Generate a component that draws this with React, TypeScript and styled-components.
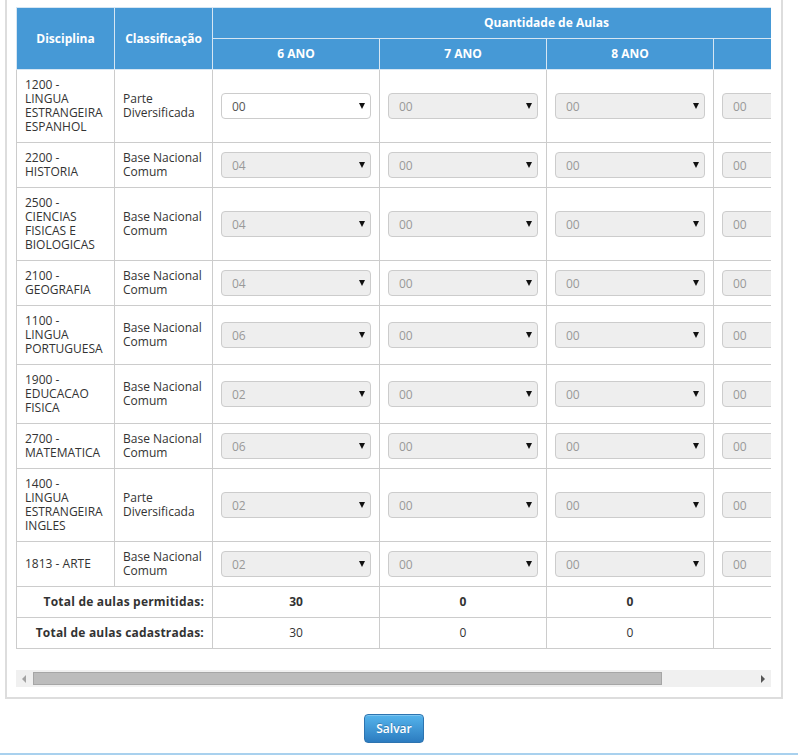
import styled, { createGlobalStyle } from "styled-components";

const GlobalStyle = createGlobalStyle`
  body {
    margin: 0;
    background: #fff;
    font-family: "Open Sans", "Liberation Sans", sans-serif;
    font-size: 12px;
    color: #333;
  }
`;

const TABLE_WIDTH = 865;
const VIEW_WIDTH = 755;

const Panel = styled.div`
  margin-left: 5px;
  width: 778px;
  box-sizing: border-box;
  border: 2px solid #ddd;
  border-top: none;
  padding: 7px 10px 10px 9px;
  background: #fff;
`;

const Scroller = styled.div`
  overflow-x: hidden;
`;

const ScrollBar = styled.div`
  display: flex;
  height: 17px;
  background: #f0f0f0;
`;

const ScrollArrow = styled.div<{ $dir: "left" | "right" }>`
  flex: 0 0 17px;
  display: flex;
  align-items: center;
  justify-content: center;

  &::before {
    content: "";
    width: 0;
    height: 0;
    border-top: 4px solid transparent;
    border-bottom: 4px solid transparent;
    ${(p) =>
      p.$dir === "left"
        ? "border-right: 4px solid #a3a3a3; margin-left: -1px;"
        : "border-left: 4px solid #555; margin-left: 1px;"}
  }
`;

const ScrollRail = styled.div`
  flex: 1;
  display: flex;
  align-items: center;
`;

const ScrollThumb = styled.div`
  height: 13px;
  box-sizing: border-box;
  background: #bcbcbc;
  border: 1px solid #a6a6a6;
`;

const Table = styled.table`
  width: ${TABLE_WIDTH}px;
  table-layout: fixed;
  border-collapse: collapse;
  margin-bottom: 21px;
  border: 1px solid #ccc;
`;

const HeadCell = styled.th`
  background: #4699d6;
  color: #fff;
  font-weight: bold;
  text-align: center;
  vertical-align: middle;
  padding: 8px;
  line-height: 14px;
  border: 1px solid #d6e6f3;
`;

const Cell = styled.td<{ $align?: "left" | "center" | "right"; $bold?: boolean }>`
  padding: 8px;
  line-height: 14px;
  vertical-align: middle;
  text-align: ${(p) => p.$align || "left"};
  font-weight: ${(p) => (p.$bold ? "bold" : "normal")};
  border: 1px solid #ccc;
  color: #333;
`;

const TotalLabel = styled(Cell)`
  letter-spacing: 0.2px;
`;

const SelectBox = styled.div`
  position: relative;
`;

const Select = styled.select`
  appearance: none;
  -webkit-appearance: none;
  display: block;
  width: 100%;
  height: 26px;
  box-sizing: border-box;
  margin: 0;
  padding: 0 22px 0 10px;
  border: 1px solid #ccc;
  border-radius: 4px;
  background: #fff;
  color: #555;
  font-family: inherit;
  font-size: 12px;

  &:disabled {
    background: #eee;
    color: #999;
    opacity: 1;
  }
`;

const Caret = styled.span`
  position: absolute;
  right: 6px;
  top: 10px;
  width: 0;
  height: 0;
  border-left: 3.5px solid transparent;
  border-right: 3.5px solid transparent;
  border-top: 6px solid #111;
  pointer-events: none;
`;

const Actions = styled.div`
  margin-left: 5px;
  width: 778px;
  padding-top: 15px;
  text-align: center;
`;

const SaveButton = styled.button`
  width: 60px;
  height: 29px;
  padding: 0;
  border: 1px solid #2d74b0;
  border-radius: 4px;
  background: linear-gradient(#55b4ec, #2c7cc0);
  color: #fff;
  font-family: inherit;
  font-size: 12px;
  font-weight: 600;
  text-shadow: 0 -1px 0 rgba(0, 0, 0, 0.2);
  box-shadow: inset 0 1px 0 rgba(255, 255, 255, 0.25);
`;

const Footer = styled.div`
  margin-top: 10px;
  border-top: 2px solid #a9d1ee;
  height: 20px;
`;

const anos = ["6 ANO", "7 ANO", "8 ANO", "9 ANO"];

interface Disciplina {
  nome: string;
  classificacao: string;
  aulas: string;
}

const disciplinas: Disciplina[] = [
  { nome: "1200 - LINGUA ESTRANGEIRA ESPANHOL", classificacao: "Parte Diversificada", aulas: "00" },
  { nome: "2200 - HISTORIA", classificacao: "Base Nacional Comum", aulas: "04" },
  { nome: "2500 - CIENCIAS FISICAS E BIOLOGICAS", classificacao: "Base Nacional Comum", aulas: "04" },
  { nome: "2100 - GEOGRAFIA", classificacao: "Base Nacional Comum", aulas: "04" },
  { nome: "1100 - LINGUA PORTUGUESA", classificacao: "Base Nacional Comum", aulas: "06" },
  { nome: "1900 - EDUCACAO FISICA", classificacao: "Base Nacional Comum", aulas: "02" },
  { nome: "2700 - MATEMATICA", classificacao: "Base Nacional Comum", aulas: "06" },
  { nome: "1400 - LINGUA ESTRANGEIRA INGLES", classificacao: "Parte Diversificada", aulas: "02" },
  { nome: "1813 - ARTE", classificacao: "Base Nacional Comum", aulas: "02" },
];

const totais = [
  { label: "Total de aulas permitidas:", valores: ["30", "0", "0", "0"], bold: true },
  { label: "Total de aulas cadastradas:", valores: ["30", "0", "0", "0"], bold: false },
];

const AulasSelect = ({ value, disabled }: { value: string; disabled: boolean }) => (
  <SelectBox>
    <Select defaultValue={value} disabled={disabled}>
      <option value={value}>{value}</option>
    </Select>
    <Caret />
  </SelectBox>
);

export default function App() {
  const thumbRatio = VIEW_WIDTH / TABLE_WIDTH;

  return (
    <>
      <GlobalStyle />
      <Panel>
        <Scroller>
          <Table>
            <colgroup>
              <col style={{ width: 98 }} />
              <col style={{ width: 98 }} />
              <col style={{ width: 167 }} />
              <col style={{ width: 167 }} />
              <col style={{ width: 167 }} />
              <col style={{ width: 167 }} />
            </colgroup>
            <thead>
              <tr>
                <HeadCell rowSpan={2}>Disciplina</HeadCell>
                <HeadCell rowSpan={2}>Classificação</HeadCell>
                <HeadCell colSpan={4}>Quantidade de Aulas</HeadCell>
              </tr>
              <tr>
                {anos.map((ano) => (
                  <HeadCell key={ano}>{ano}</HeadCell>
                ))}
              </tr>
            </thead>
            <tbody>
              {disciplinas.map((d, i) => (
                <tr key={d.nome}>
                  <Cell>{d.nome}</Cell>
                  <Cell>{d.classificacao}</Cell>
                  {anos.map((ano, j) => (
                    <Cell key={ano}>
                      <AulasSelect
                        value={j === 0 ? d.aulas : "00"}
                        disabled={!(i === 0 && j === 0)}
                      />
                    </Cell>
                  ))}
                </tr>
              ))}
              {totais.map((t) => (
                <tr key={t.label}>
                  <TotalLabel colSpan={2} $align="right" $bold>
                    {t.label}
                  </TotalLabel>
                  {t.valores.map((v, j) => (
                    <Cell key={j} $align="center" $bold={t.bold}>
                      {v}
                    </Cell>
                  ))}
                </tr>
              ))}
            </tbody>
          </Table>
        </Scroller>
        <ScrollBar>
          <ScrollArrow $dir="left" />
          <ScrollRail>
            <ScrollThumb style={{ width: `${thumbRatio * 100}%` }} />
          </ScrollRail>
          <ScrollArrow $dir="right" />
        </ScrollBar>
      </Panel>
      <Actions>
        <SaveButton type="button">Salvar</SaveButton>
      </Actions>
      <Footer />
    </>
  );
}
